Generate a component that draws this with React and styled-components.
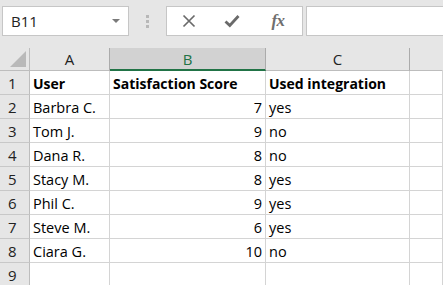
import React from "react";
import styled, { createGlobalStyle } from "styled-components";

const Global = createGlobalStyle`
  html, body { margin: 0; padding: 0; background: #ffffff; overflow: hidden; }
  body { font-family: "Open Sans", Lato, sans-serif; }
`;

const Page = styled.div`
  width: 443px;
  height: 285px;
  display: flex;
  flex-direction: column;
  background: #e6e6e6;
  overflow: hidden;
`;

const Toolbar = styled.div`
  height: 48px;
  flex: none;
  display: flex;
  align-items: flex-start;
  padding: 6px 0 0 2px;
  box-sizing: border-box;
  background: #e6e6e6;
`;

const NameBox = styled.div`
  width: 127px;
  height: 30px;
  box-sizing: border-box;
  border: 1px solid #c6c6c6;
  background: #fff;
  display: flex;
  align-items: center;
  justify-content: space-between;
  padding: 0 8px 0 8px;
  font-size: 15px;
  color: #222;
`;

const Caret = styled.span`
  width: 0;
  height: 0;
  border-left: 4px solid transparent;
  border-right: 4px solid transparent;
  border-top: 4px solid #7a7a7a;
`;

const Grip = styled.div`
  width: 37px;
  height: 30px;
  display: flex;
  flex-direction: column;
  align-items: center;
  justify-content: center;
  gap: 2px;
`;

const Dot = styled.span`
  width: 3px;
  height: 3px;
  background: #b8b8b8;
`;

const FxBox = styled.div`
  width: 137px;
  height: 30px;
  box-sizing: border-box;
  border: 1px solid #c6c6c6;
  background: #fff;
  display: flex;
  align-items: center;
  padding-left: 15px;
`;

const IconSlot = styled.span`
  width: ${(p) => p.w}px;
  display: flex;
  justify-content: center;
  align-items: center;
`;

const Fx = styled.span`
  font-family: "Liberation Serif", "DejaVu Serif", serif;
  font-style: italic;
  font-weight: 700;
  font-size: 17px;
  color: #6f6f6f;
  letter-spacing: -0.5px;
`;

const FormulaInput = styled.div`
  flex: 1;
  height: 30px;
  margin-left: 3px;
  box-sizing: border-box;
  border: 1px solid #c6c6c6;
  border-right: none;
  background: #fff;
`;

const Sheet = styled.div`
  flex: 1;
  display: grid;
  grid-template-columns: 30px 80px 156px 144px 1fr;
  grid-template-rows: 23px repeat(9, 24px);
  background: #fff;
`;

const Corner = styled.div`
  background: #e6e6e6;
  border-right: 1px solid #bdbdbd;
  border-bottom: 1px solid #bdbdbd;
  position: relative;
`;

const Triangle = styled.span`
  position: absolute;
  right: 3px;
  bottom: 3px;
  width: 0;
  height: 0;
  border-left: 16px solid transparent;
  border-bottom: 16px solid #b9b9b9;
`;

const ColHead = styled.div`
  background: ${(p) => (p.selected ? "#d2d2d2" : "#e6e6e6")};
  border-right: 1px solid ${(p) => (p.last ? "transparent" : "#ababab")};
  border-bottom: ${(p) => (p.selected ? "2px solid #217346" : "1px solid #bdbdbd")};
  color: ${(p) => (p.selected ? "#217346" : "#222")};
  display: flex;
  align-items: center;
  justify-content: center;
  font-size: 15px;
  padding-top: ${(p) => (p.selected ? 1 : 0)}px;
`;

const RowHead = styled.div`
  background: #e6e6e6;
  border-right: 1px solid #bdbdbd;
  border-bottom: 1px solid #c8c8c8;
  color: #222;
  font-size: 15px;
  display: flex;
  align-items: flex-end;
  padding: 0 0 1px 8px;
  box-sizing: border-box;
`;

const Cell = styled.div`
  border-right: 1px solid #d4d4d4;
  border-bottom: 1px solid #d4d4d4;
  font-size: ${(p) => (p.bold ? 14 : 14.5)}px;
  font-weight: ${(p) => (p.bold ? 700 : 400)};
  color: #000;
  display: flex;
  align-items: flex-end;
  justify-content: ${(p) => (p.num ? "flex-end" : "flex-start")};
  padding: 0 3px 1px 3px;
  box-sizing: border-box;
  white-space: nowrap;
  overflow: hidden;
`;

const data = [
  ["Barbra C.", 7, "yes"],
  ["Tom J.", 9, "no"],
  ["Dana R.", 8, "no"],
  ["Stacy M.", 8, "yes"],
  ["Phil C.", 9, "yes"],
  ["Steve M.", 6, "yes"],
  ["Ciara G.", 10, "no"],
];

export default function App() {
  return (
    <Page>
      <Global />
      <Toolbar>
        <NameBox>
          <span>B11</span>
          <Caret />
        </NameBox>
        <Grip>
          <Dot />
          <Dot />
          <Dot />
        </Grip>
        <FxBox>
          <IconSlot w={14}>
            <svg width="14" height="14" viewBox="0 0 14 14">
              <path d="M1.5 1.5 L12.5 12.5 M12.5 1.5 L1.5 12.5" stroke="#6a6a6a" strokeWidth="1.7" fill="none" />
            </svg>
          </IconSlot>
          <IconSlot w={72}>
            <svg width="16" height="14" viewBox="0 0 16 14">
              <path d="M1.5 7.5 L5.8 11.5 L14.5 2" stroke="#6a6a6a" strokeWidth="2.8" fill="none" strokeLinejoin="miter" />
            </svg>
          </IconSlot>
          <IconSlot w={20}>
            <Fx>fx</Fx>
          </IconSlot>
        </FxBox>
        <FormulaInput />
      </Toolbar>
      <Sheet>
        <Corner>
          <Triangle />
        </Corner>
        <ColHead>A</ColHead>
        <ColHead selected>B</ColHead>
        <ColHead>C</ColHead>
        <ColHead last />

        <RowHead>1</RowHead>
        <Cell bold>User</Cell>
        <Cell bold>Satisfaction Score</Cell>
        <Cell bold>Used integration</Cell>
        <Cell />

        {data.map((r, i) => (
          <React.Fragment key={i}>
            <RowHead>{i + 2}</RowHead>
            <Cell>{r[0]}</Cell>
            <Cell num>{r[1]}</Cell>
            <Cell>{r[2]}</Cell>
            <Cell />
          </React.Fragment>
        ))}

        <RowHead>9</RowHead>
        <Cell />
        <Cell />
        <Cell />
        <Cell />
      </Sheet>
    </Page>
  );
}
